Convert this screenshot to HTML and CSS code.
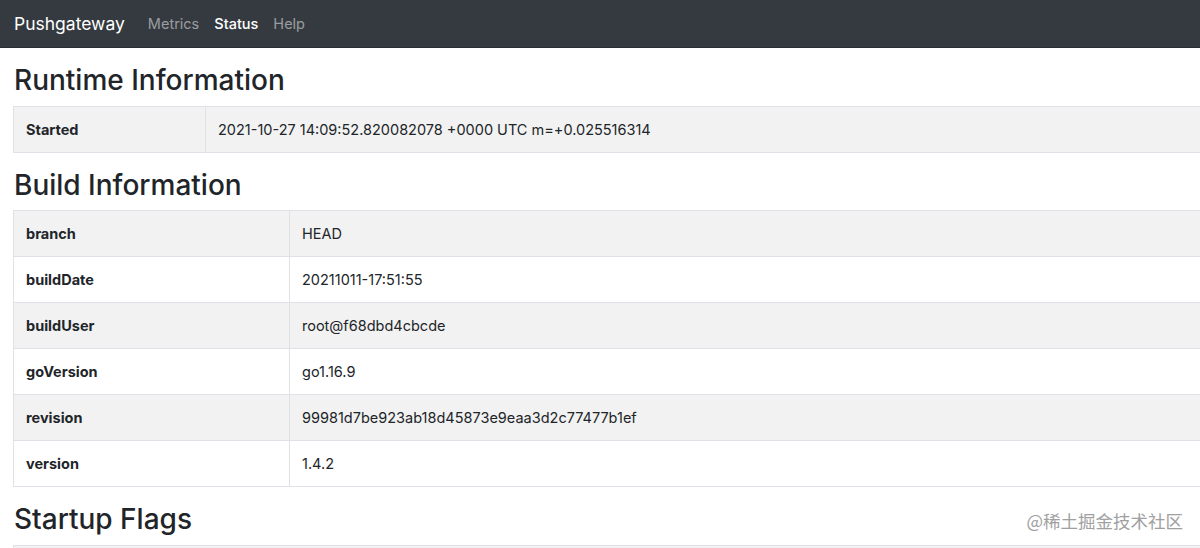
FILE: index.html
```html
<!DOCTYPE html>
<html>
<head>
<meta charset="utf-8">
<link rel="stylesheet" href="styles.css">
</head>
<body>
<nav class="navbar">
  <span class="brand">Pushgateway</span>
  <ul class="nav">
    <li class="nav-link">Metrics</li>
    <li class="nav-link active">Status</li>
    <li class="nav-link">Help</li>
  </ul>
</nav>
<main class="page">
  <h2 class="title">Runtime Information</h2>
  <table class="table table-runtime">
    <tbody>
      <tr><th>Started</th><td>2021-10-27 14:09:52.820082078 +0000 UTC m=+0.025516314</td></tr>
    </tbody>
  </table>
  <h2 class="title">Build Information</h2>
  <table class="table table-build">
    <tbody>
      <tr><th>branch</th><td>HEAD</td></tr>
      <tr><th>buildDate</th><td>20211011-17:51:55</td></tr>
      <tr><th>buildUser</th><td>root@f68dbd4cbcde</td></tr>
      <tr><th>goVersion</th><td>go1.16.9</td></tr>
      <tr><th>revision</th><td>99981d7be923ab18d45873e9eaa3d2c77477b1ef</td></tr>
      <tr><th>version</th><td>1.4.2</td></tr>
    </tbody>
  </table>
  <h2 class="title">Startup Flags</h2>
  <table class="table table-flags">
    <tbody>
      <tr><th>&nbsp;</th><td>&nbsp;</td></tr>
    </tbody>
  </table>
</main>
<div class="watermark">@稀土掘金技术社区</div>
</body>
</html>
```

FILE: styles.css
```css
html, body {
  margin: 0;
  padding: 0;
  overflow: hidden;
  height: 548px;
}
body {
  font-family: Inter, "Liberation Sans", "Noto Sans CJK SC", sans-serif;
  color: #212529;
  background: #fff;
  position: relative;
}
.navbar {
  display: flex;
  align-items: center;
  height: 48px;
  background: #343a40;
  padding: 0 14px;
  box-sizing: border-box;
  border-bottom: 1px solid #2a2e33;
}
.brand {
  color: #fff;
  font-size: 17.5px;
  margin-right: 23px;
}
.nav {
  display: flex;
  list-style: none;
  margin: 0;
  padding: 0;
  gap: 15px;
}
.nav-link {
  color: rgba(255,255,255,0.5);
  font-size: 14.5px;
}
.nav-link.active {
  color: #fff;
  font-weight: 500;
}
.page {
  padding: 0 0 0 13px;
  overflow: hidden;
}
.title {
  font-size: 28px;
  font-weight: 500;
  margin: 16px 0 8px 1px;
  line-height: 1.2;
}
.table {
  width: calc(100% + 4px);
  border-collapse: collapse;
  font-size: 14.5px;
}
.table th, .table td {
  border: 1px solid #dee2e6;
  padding: 0 12px;
  height: 45px;
  text-align: left;
  vertical-align: middle;
}
.table th {
  font-weight: 700;
  box-sizing: border-box;
}
.table-runtime th {
  width: 192px;
}
.table-build th {
  width: 276px;
}
.table-flags th {
  border-right-style: hidden;
}
.table-flags td {
  border-left-style: hidden;
}
.table tr:nth-child(odd) {
  background: #f2f2f2;
}
.watermark {
  position: absolute;
  right: 17px;
  bottom: 15px;
  color: #a0a0a0;
  font-size: 17.5px;
  font-family: "Noto Sans CJK SC", sans-serif;
}
```
